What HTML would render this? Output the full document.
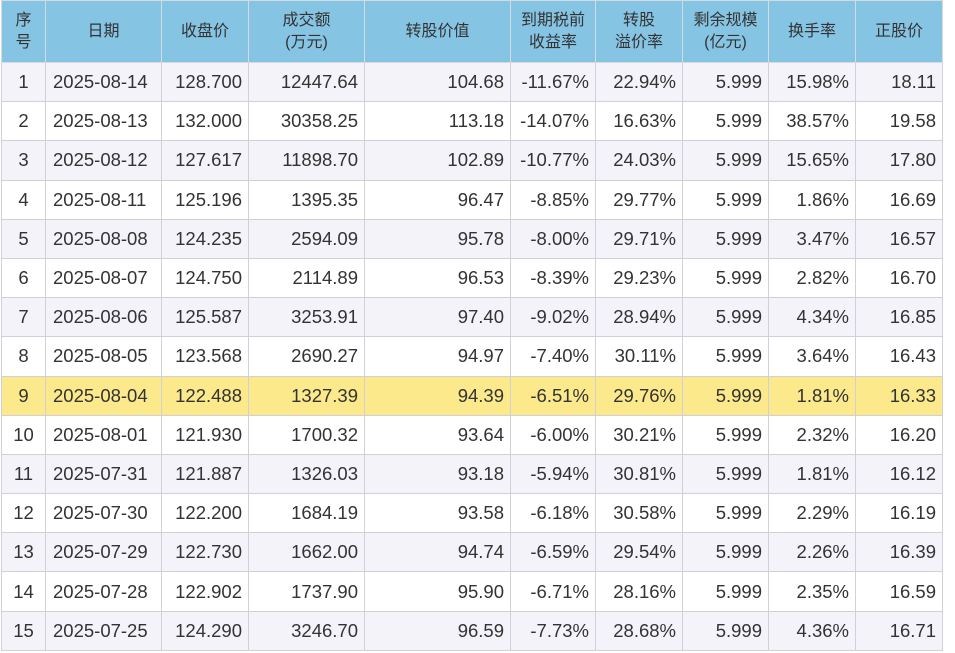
<!DOCTYPE html>
<html><head><meta charset="utf-8"><style>
body{margin:0;background:#fff;width:955px;height:653px;overflow:hidden}
table{position:absolute;left:1px;top:0;border-collapse:collapse;font-family:"Liberation Sans","Noto Sans CJK SC",sans-serif;font-size:18.5px;color:#333;table-layout:fixed;width:941px}
th{background:#86c4e4;font-weight:normal;font-size:16px;height:59px;border:1px solid #d4dbe3;line-height:22px;color:#333}
td{height:38.2px;border:1px solid #d0d0d8;text-align:right;padding:0 6px;white-space:nowrap;line-height:20px}
td:first-child{text-align:center;padding:0}
td:nth-child(2){text-align:left;padding:0 0 0 7px}
tr:nth-child(odd) td{background:#f4f3f9}
tr:nth-child(even) td{background:#fff}
tr.hl td{background:#fbe98b}
</style></head><body>
<table>
<colgroup><col style="width:44px"><col style="width:116px"><col style="width:87px"><col style="width:116px"><col style="width:146px"><col style="width:85px"><col style="width:87px"><col style="width:86px"><col style="width:87px"><col style="width:87px"></colgroup>
<thead><tr><th>序<br>号</th><th>日期</th><th>收盘价</th><th>成交额<br>(万元)</th><th>转股价值</th><th>到期税前<br>收益率</th><th>转股<br>溢价率</th><th>剩余规模<br>(亿元)</th><th>换手率</th><th>正股价</th></tr></thead>
<tbody>
<tr><td>1</td><td>2025-08-14</td><td>128.700</td><td>12447.64</td><td>104.68</td><td>-11.67%</td><td>22.94%</td><td>5.999</td><td>15.98%</td><td>18.11</td></tr>
<tr><td>2</td><td>2025-08-13</td><td>132.000</td><td>30358.25</td><td>113.18</td><td>-14.07%</td><td>16.63%</td><td>5.999</td><td>38.57%</td><td>19.58</td></tr>
<tr><td>3</td><td>2025-08-12</td><td>127.617</td><td>11898.70</td><td>102.89</td><td>-10.77%</td><td>24.03%</td><td>5.999</td><td>15.65%</td><td>17.80</td></tr>
<tr><td>4</td><td>2025-08-11</td><td>125.196</td><td>1395.35</td><td>96.47</td><td>-8.85%</td><td>29.77%</td><td>5.999</td><td>1.86%</td><td>16.69</td></tr>
<tr><td>5</td><td>2025-08-08</td><td>124.235</td><td>2594.09</td><td>95.78</td><td>-8.00%</td><td>29.71%</td><td>5.999</td><td>3.47%</td><td>16.57</td></tr>
<tr><td>6</td><td>2025-08-07</td><td>124.750</td><td>2114.89</td><td>96.53</td><td>-8.39%</td><td>29.23%</td><td>5.999</td><td>2.82%</td><td>16.70</td></tr>
<tr><td>7</td><td>2025-08-06</td><td>125.587</td><td>3253.91</td><td>97.40</td><td>-9.02%</td><td>28.94%</td><td>5.999</td><td>4.34%</td><td>16.85</td></tr>
<tr><td>8</td><td>2025-08-05</td><td>123.568</td><td>2690.27</td><td>94.97</td><td>-7.40%</td><td>30.11%</td><td>5.999</td><td>3.64%</td><td>16.43</td></tr>
<tr class="hl"><td>9</td><td>2025-08-04</td><td>122.488</td><td>1327.39</td><td>94.39</td><td>-6.51%</td><td>29.76%</td><td>5.999</td><td>1.81%</td><td>16.33</td></tr>
<tr><td>10</td><td>2025-08-01</td><td>121.930</td><td>1700.32</td><td>93.64</td><td>-6.00%</td><td>30.21%</td><td>5.999</td><td>2.32%</td><td>16.20</td></tr>
<tr><td>11</td><td>2025-07-31</td><td>121.887</td><td>1326.03</td><td>93.18</td><td>-5.94%</td><td>30.81%</td><td>5.999</td><td>1.81%</td><td>16.12</td></tr>
<tr><td>12</td><td>2025-07-30</td><td>122.200</td><td>1684.19</td><td>93.58</td><td>-6.18%</td><td>30.58%</td><td>5.999</td><td>2.29%</td><td>16.19</td></tr>
<tr><td>13</td><td>2025-07-29</td><td>122.730</td><td>1662.00</td><td>94.74</td><td>-6.59%</td><td>29.54%</td><td>5.999</td><td>2.26%</td><td>16.39</td></tr>
<tr><td>14</td><td>2025-07-28</td><td>122.902</td><td>1737.90</td><td>95.90</td><td>-6.71%</td><td>28.16%</td><td>5.999</td><td>2.35%</td><td>16.59</td></tr>
<tr><td>15</td><td>2025-07-25</td><td>124.290</td><td>3246.70</td><td>96.59</td><td>-7.73%</td><td>28.68%</td><td>5.999</td><td>4.36%</td><td>16.71</td></tr>
</tbody></table>
</body></html>
